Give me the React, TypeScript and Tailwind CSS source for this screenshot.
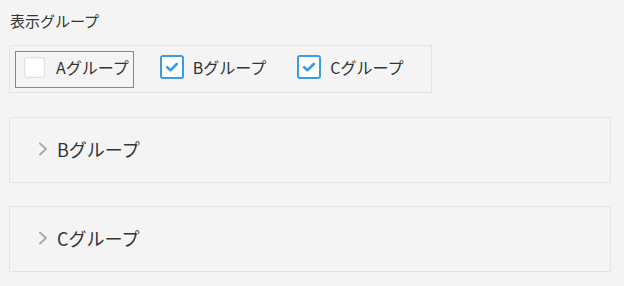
import React from "react";

const font = { fontFamily: '"Noto Sans CJK JP", "Noto Sans", sans-serif' };

function Check({ checked }: { checked: boolean }) {
  if (!checked) {
    return (
      <span className="block w-[21px] h-[21px] bg-white border border-[#e2e2e2] rounded-[2px] shadow-[inset_0_0_2px_rgba(0,0,0,0.12)] shrink-0" />
    );
  }
  return (
    <span className="flex items-center justify-center w-[24px] h-[24px] bg-white border-2 border-[#3d9be0] rounded-[3px] shrink-0">
      <svg width="16" height="16" viewBox="0 0 16 16">
        <polyline
          points="3.2,8.2 6.4,11.2 12.8,5"
          fill="none"
          stroke="#3d9be0"
          strokeWidth="2.6"
          strokeLinecap="round"
          strokeLinejoin="round"
        />
      </svg>
    </span>
  );
}

function Item({ label, checked, focused }: { label: string; checked: boolean; focused?: boolean }) {
  const inner = (
    <>
      <Check checked={checked} />
      {checked ? (
        <span className="ml-[9px] text-[16px] text-[#333] leading-[22px]">{label}</span>
      ) : (
        <span className="ml-[11px] text-[16px] text-[#333] leading-[22px]">{label}</span>
      )}
    </>
  );
  if (focused) {
    return (
      <div className="flex items-center h-[37px] pl-[9px] pr-[5px] pb-[6px] pt-px shadow-[inset_0_0_0_1px_#3d9be0]">
        {inner}
      </div>
    );
  }
  return (
    <div className="flex items-center h-[37px] pl-[9px] pr-[5px] pb-[6px] pt-px">
      {inner}
    </div>
  );
}

function Panel({ label }: { label: string }) {
  return (
    <div className="flex items-center w-[602px] h-[66px] border border-[#e3e3e3] pl-[28px] pb-[2px]">
      <svg width="10" height="14" viewBox="0 0 10 14" className="shrink-0">
        <polyline
          points="2,1.5 8,7 2,12.5"
          fill="none"
          stroke="#ababab"
          strokeWidth="2"
          strokeLinecap="round"
          strokeLinejoin="round"
        />
      </svg>
      <span className="ml-[9px] text-[18px] text-[#333] leading-[24px]">{label}</span>
    </div>
  );
}

export default function App() {
  return (
    <div className="w-[624px] h-[286px] bg-[#f4f4f4] pl-[9px] pt-[10px] overflow-hidden" style={font}>
      <div className="text-[15px] leading-[22px] text-[#333] ml-[1px]">表示グループ</div>
      <div className="mt-[13px] w-[423px] h-[48px] border border-[#e3e3e3] pl-[5px] pt-[5px] flex gap-[17px]">
        <Item label="Aグループ" checked={false} focused />
        <Item label="Bグループ" checked />
        <Item label="Cグループ" checked />
      </div>
      <div className="mt-[24px]">
        <Panel label="Bグループ" />
      </div>
      <div className="mt-[23px]">
        <Panel label="Cグループ" />
      </div>
    </div>
  );
}
